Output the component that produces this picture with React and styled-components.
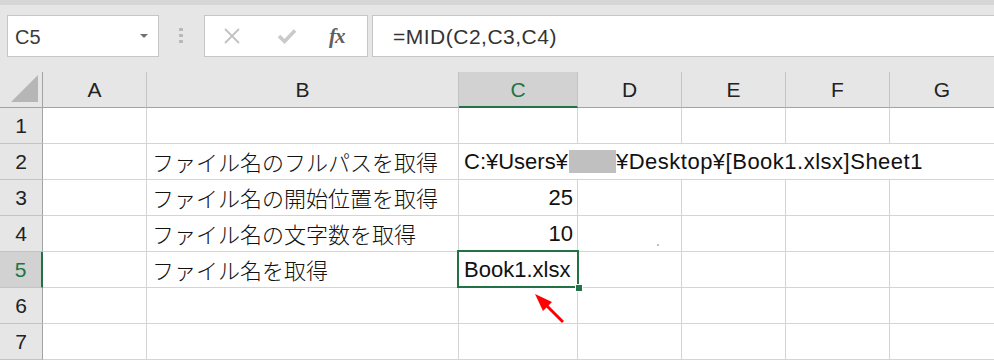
import React from 'react';
import styled, { createGlobalStyle } from 'styled-components';

const GlobalStyle = createGlobalStyle`
  body {
    margin: 0;
    background: #ffffff;
    font-family: "Liberation Sans", "Noto Sans CJK JP", sans-serif;
    overflow: hidden;
  }
`;

const green = '#217346';
const grid = '#d4d4d4';
const headLine = '#c4c4c4';
const headEdge = '#a3a3a3';

const cols = ['A', 'B', 'C', 'D', 'E', 'F', 'G'];

const rows = [
  { n: 1, cells: {} },
  { n: 2, cells: { B: 'ファイル名のフルパスを取得', C: 'path' } },
  { n: 3, cells: { B: 'ファイル名の開始位置を取得', C: '25' } },
  { n: 4, cells: { B: 'ファイル名の文字数を取得', C: '10' } },
  { n: 5, cells: { B: 'ファイル名を取得', C: 'Book1.xlsx' } },
  { n: 6, cells: {} },
  { n: 7, cells: {} },
];

const App = () => {
  return (
    <>
      <GlobalStyle />
      <Page>
        <Toolbar>
          <NameBox>
            <span>C5</span>
            <Caret />
          </NameBox>
          <Grip>
            <i />
            <i />
            <i />
          </Grip>
          <FuncBox>
            <svg width="18" height="16" viewBox="0 0 18 16">
              <path d="M2 1 L16 15 M16 1 L2 15" stroke="#c4c4c4" strokeWidth="2" fill="none" />
            </svg>
            <svg width="20" height="16" viewBox="0 0 20 16">
              <path d="M2 8 L7.5 13.5 L18 2.5" stroke="#cacaca" strokeWidth="3.6" fill="none" />
            </svg>
            <Fx>fx</Fx>
          </FuncBox>
          <FormulaInput>=MID(C2,C3,C4)</FormulaInput>
        </Toolbar>

        <Sheet>
          <Corner>
            <svg width="28" height="28" viewBox="0 0 28 28">
              <polygon points="0,27 27,27 27,0" fill="#b6b6b6" />
            </svg>
          </Corner>
          {cols.map((c) => (
            <ColHead key={c} $active={c === 'C'} $last={c === 'G'}>
              {c}
            </ColHead>
          ))}

          {rows.map((r) => (
            <React.Fragment key={r.n}>
              <RowHead $active={r.n === 5}>{r.n}</RowHead>
              {cols.map((c) => {
                const v = r.cells[c];
                if (r.n === 2 && c === 'C') {
                  return (
                    <Cell key={c} $span={5}>
                      C:¥Users¥<Redact />
                      <Wide>¥Desktop¥[Book1.xlsx]Sheet1</Wide>
                    </Cell>
                  );
                }
                if (r.n === 2 && ['D', 'E', 'F', 'G'].includes(c)) return null;
                const numeric = v && /^\d+$/.test(v);
                return (
                  <Cell key={c} $right={numeric} $last={c === 'G'} $jp={c === 'B'}>
                    {v}
                    {r.n === 4 && c === 'D' && <Speck />}
                    {r.n === 5 && c === 'C' && (
                      <Selection>
                        <FillHandle />
                      </Selection>
                    )}
                  </Cell>
                );
              })}
            </React.Fragment>
          ))}
        </Sheet>

        <Arrow width="40" height="40" viewBox="0 0 40 40">
          <line x1="15" y1="16" x2="33" y2="34" stroke="#ff0000" strokeWidth="3" />
          <polygon points="5,6 22,14 13,23" fill="#ff0000" />
        </Arrow>
      </Page>
    </>
  );
};

export default App;

const Page = styled.div`
  position: relative;
  width: 994px;
  height: 360px;
  overflow: hidden;
  background: #e6e6e6;
`;

const Toolbar = styled.div`
  height: 72px;
  box-sizing: border-box;
  border-top: 5px solid #d6d6d6;
  padding: 10px 0 0 7px;
  display: flex;
  align-items: flex-start;
  background: #e6e6e6;
`;

const NameBox = styled.div`
  width: 152px;
  height: 42px;
  box-sizing: border-box;
  background: #fff;
  border: 1px solid #c6c6c6;
  display: flex;
  align-items: center;
  justify-content: space-between;
  padding: 0 10px 0 7px;
  font-size: 20px;
  color: #3a3a3a;

  span {
    padding-top: 3px;
  }
`;

const Caret = styled.i`
  width: 0;
  height: 0;
  border-left: 4px solid transparent;
  border-right: 4px solid transparent;
  border-top: 4px solid #707070;
`;

const Grip = styled.div`
  width: 4px;
  margin: 13px 21px 0 20px;
  display: flex;
  flex-direction: column;
  gap: 3px;

  i {
    width: 4px;
    height: 3px;
    background: #b9b9b9;
  }
`;

const FuncBox = styled.div`
  width: 164px;
  height: 42px;
  box-sizing: border-box;
  background: #fff;
  border: 1px solid #c6c6c6;
  display: flex;
  align-items: center;
  padding: 0 0 0 18px;
  gap: 36px;
`;

const Fx = styled.span`
  font-family: "Liberation Serif", serif;
  font-style: italic;
  font-weight: bold;
  font-size: 21px;
  color: #606060;
  margin-left: -4px;
  letter-spacing: -1px;
`;

const FormulaInput = styled.div`
  flex: 1;
  margin-left: 4px;
  height: 42px;
  box-sizing: border-box;
  background: #fff;
  border: 1px solid #c6c6c6;
  border-right: none;
  display: flex;
  align-items: center;
  padding: 2px 0 0 20px;
  font-size: 21px;
  letter-spacing: 0.5px;
  color: #333;
`;

const Sheet = styled.div`
  display: grid;
  grid-template-columns: 43px 104px 312px 119px 104px 104px 104px 1fr;
  grid-auto-rows: 36px;
  background: #fff;
`;

const HeadBase = styled.div`
  box-sizing: border-box;
  background: #e6e6e6;
  display: flex;
  align-items: center;
  justify-content: center;
  font-size: 21px;
  color: #222;
`;

const Corner = styled(HeadBase)`
  align-items: flex-end;
  justify-content: flex-end;
  padding: 0 3px 4px 0;
  border-right: 1px solid ${headEdge};
  border-bottom: 1px solid ${headEdge};
`;

const ColHead = styled(HeadBase)`
  border-right: ${(p) => (p.$last ? 'none' : `1px solid ${headLine}`)};
  border-bottom: ${(p) => (p.$active ? `2px solid ${green}` : `1px solid ${headEdge}`)};
  background: ${(p) => (p.$active ? '#d2d2d2' : '#e6e6e6')};
  color: ${(p) => (p.$active ? green : '#222')};
  padding-top: ${(p) => (p.$active ? '1px' : '0')};
`;

const RowHead = styled(HeadBase)`
  border-right: ${(p) => (p.$active ? `2px solid ${green}` : `1px solid ${headEdge}`)};
  border-bottom: 1px solid ${headLine};
  background: ${(p) => (p.$active ? '#d2d2d2' : '#e6e6e6')};
  color: ${(p) => (p.$active ? green : '#222')};
`;

const Cell = styled.div`
  position: relative;
  box-sizing: border-box;
  grid-column: ${(p) => (p.$span ? `span ${p.$span}` : 'auto')};
  border-right: ${(p) => (p.$last || p.$span ? 'none' : `1px solid ${grid}`)};
  border-bottom: 1px solid ${grid};
  display: flex;
  align-items: center;
  justify-content: ${(p) => (p.$right ? 'flex-end' : 'flex-start')};
  padding: ${(p) => (p.$jp ? '0 4px 2px 5px' : '0 4px 0 5px')};
  font-size: 22px;
  font-weight: ${(p) => (p.$jp ? 300 : 400)};
  color: #111;
  white-space: nowrap;
`;

const Redact = styled.span`
  display: inline-block;
  width: 47px;
  height: 23px;
  margin-left: 1px;
  background: #c0c0c0;
`;

const Wide = styled.span`
  letter-spacing: 0.5px;
`;

const Speck = styled.i`
  position: absolute;
  left: 79px;
  top: 28px;
  width: 2px;
  height: 2px;
  background: #bdbdbd;
`;

const Selection = styled.div`
  position: absolute;
  z-index: 2;
  left: -2px;
  right: -2px;
  top: -2px;
  bottom: -1px;
  border: 2px solid ${green};
  pointer-events: none;
`;

const FillHandle = styled.i`
  position: absolute;
  right: -6px;
  bottom: -6px;
  width: 6px;
  height: 6px;
  background: ${green};
  border: 1px solid #fff;
`;

const Arrow = styled.svg`
  position: absolute;
  left: 530px;
  top: 288px;
`;
